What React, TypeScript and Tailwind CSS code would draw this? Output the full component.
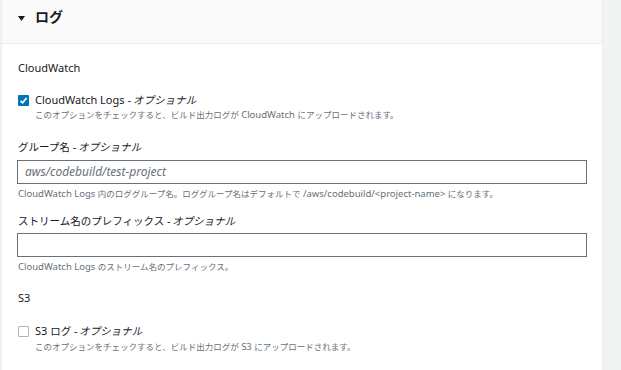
import React from "react";

const font = { fontFamily: '"Noto Sans", "Noto Sans CJK JP", sans-serif' };

// Japanese runs come out a bit narrower in the original, so they get their own size
const jpRe = /([\u3000-\u30ff\u4e00-\u9fff\uff00-\uffef]+)/;

const Jp = ({ text, size }: { text: string; size: string }) => (
  <>
    {text.split(jpRe).map((part, i) =>
      i % 2 === 1 ? (
        <span key={i} className={size}>
          {part}
        </span>
      ) : (
        <React.Fragment key={i}>{part}</React.Fragment>
      )
    )}
  </>
);

const Check = ({ checked }: { checked: boolean }) =>
  checked ? (
    <span className="mt-[3px] flex h-[11px] w-[11px] shrink-0 items-center justify-center rounded-[1px] bg-[#0073bb]">
      <svg width="9" height="9" viewBox="0 0 9 9">
        <path d="M1.5 4.8 L3.6 6.8 L7.6 2" stroke="#fff" strokeWidth="1.8" fill="none" />
      </svg>
    </span>
  ) : (
    <span className="mt-[3px] h-[11px] w-[11px] shrink-0 rounded-[1px] border border-[#aab7b8] bg-white" />
  );

const Optional = () => (
  <span className="inline-block -skew-x-12 text-[10.5px]">オプショナル</span>
);

const Help = ({ text, className = "" }: { text: string; className?: string }) => (
  <div className={"h-[14px] whitespace-nowrap text-[9.5px] leading-[14px] text-[#687078] " + className}>
    <Jp text={text} size="text-[8.5px]" />
  </div>
);

const Label = ({ text, optional, className = "" }: { text: string; optional?: boolean; className?: string }) => (
  <div className={"h-[16px] whitespace-nowrap text-[11px] leading-[16px] text-[#16191f] " + className}>
    <Jp text={text} size="text-[10.5px]" />
    {optional && (
      <>
        {" - "}
        <Optional />
      </>
    )}
  </div>
);

const App = () => {
  return (
    <div className="flex h-[370px] w-[621px] overflow-hidden bg-[#f2f3f3]" style={font}>
      <div className="ml-px h-full w-[602px] border-x border-[#eaeded] bg-white">
        <div className="flex h-[44px] items-start border-b border-[#eaeded] bg-[#fafafa] pl-[16px] pt-[8px]">
          <svg className="mt-[8px]" width="7" height="5" viewBox="0 0 7 5">
            <path d="M0 0 H7 L3.5 5 Z" fill="#16191f" />
          </svg>
          <span className="ml-[10px] text-[14px] font-bold leading-[18px] text-[#16191f]">ログ</span>
        </div>

        <div className="pl-[15px] pr-[15px]">
          <Label className="mt-[16px] pl-px" text="CloudWatch" />

          <div className="mt-[16px] flex gap-[6px] pl-px">
            <Check checked />
            <div>
              <Label text="CloudWatch Logs" optional />
              <Help text="このオプションをチェックすると、ビルド出力ログが CloudWatch にアップロードされます。" />
            </div>
          </div>

          <Label className="mt-[17px] pl-px" text="グループ名" optional />
          <div className="mt-[5px] flex h-[24px] items-center border border-[#687078] px-[7px] text-[12px] italic text-[#687078]">
            aws/codebuild/test-project
          </div>
          <Help
            className="mt-[3px] pl-px"
            text="CloudWatch Logs 内のロググループ名。ロググループ名はデフォルトで /aws/codebuild/<project-name> になります。"
          />

          <Label className="mt-[12px] pl-px" text="ストリーム名のプレフィックス" optional />
          <div className="mt-[4px] h-[24px] border border-[#687078]" />
          <Help className="mt-[3px] pl-px" text="CloudWatch Logs のストリーム名のプレフィックス。" />

          <Label className="mt-[16px] pl-px" text="S3" />

          <div className="mt-[17px] flex gap-[6px] pl-px">
            <Check checked={false} />
            <div>
              <Label text="S3 ログ" optional />
              <Help className="mt-px" text="このオプションをチェックすると、ビルド出力ログが S3 にアップロードされます。" />
            </div>
          </div>
        </div>
      </div>
    </div>
  );
};

export default App;
